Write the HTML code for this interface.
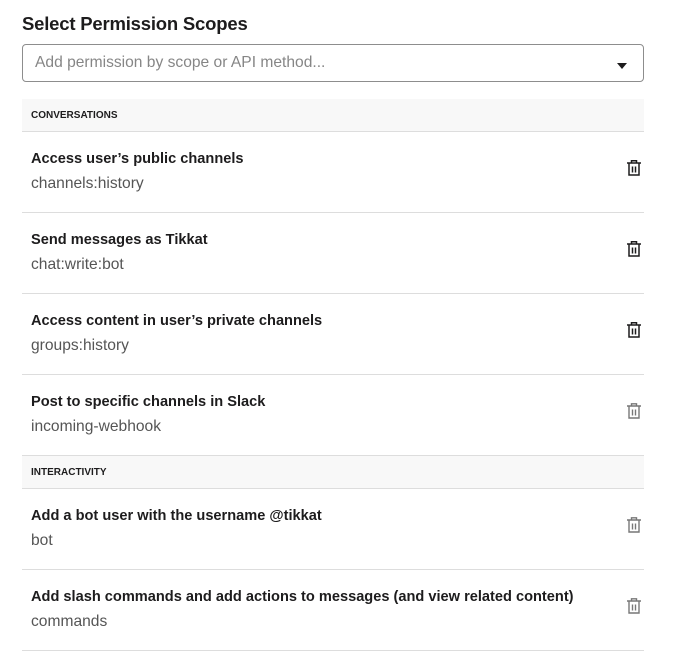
<!DOCTYPE html>
<html><head><style>
body{margin:0;background:#fff;font-family:"Liberation Sans",sans-serif;color:#1d1c1d;}
.w{position:absolute;left:22px;width:622px;}
h1{position:absolute;left:22px;top:13px;margin:0;font-size:18.5px;font-weight:bold;letter-spacing:-0.2px;}
.inp{border:1px solid #8d8d8d;border-radius:4px;box-sizing:border-box;height:38px;}
.inp span{position:absolute;left:12px;top:9px;font-size:15.6px;color:#868686;}
.inp i{position:absolute;right:16px;top:18px;width:0;height:0;border-left:5px solid transparent;border-right:5px solid transparent;border-top:6px solid #1d1c1d;}
.sec{background:#f8f8f8;border-bottom:1px solid #ddd;box-sizing:border-box;height:33px;}
.sec span{position:absolute;left:9px;top:11px;font-size:10px;font-weight:bold;}
.row{height:81px;border-bottom:1px solid #ddd;box-sizing:border-box;}
.row b{position:absolute;left:9px;top:19px;font-size:14.6px;}
.row span{position:absolute;left:9px;top:43px;font-size:15.6px;color:#555;}
.row svg{position:absolute;left:604px;top:27px;}
</style></head><body>
<h1>Select Permission Scopes</h1>
<div class="w inp" style="top:44px"><span>Add permission by scope or API method...</span><i></i></div>
<div class="w sec" style="top:99px"><span>CONVERSATIONS</span></div>
<div class="w row" style="top:132px"><b>Access user’s public channels</b><span>channels:history</span><svg width="16" height="18" viewBox="0 0 16 18" fill="none" stroke="#1d1c1d" stroke-width="1.5"><path d="M1 4h14M5.5 4V1.8h5V4M3 4.5v11.5h10V4.5M6.5 7.5v6M9.5 7.5v6"/></svg></div>
<div class="w row" style="top:213px"><b>Send messages as Tikkat</b><span>chat:write:bot</span><svg width="16" height="18" viewBox="0 0 16 18" fill="none" stroke="#1d1c1d" stroke-width="1.5"><path d="M1 4h14M5.5 4V1.8h5V4M3 4.5v11.5h10V4.5M6.5 7.5v6M9.5 7.5v6"/></svg></div>
<div class="w row" style="top:294px"><b>Access content in user’s private channels</b><span>groups:history</span><svg width="16" height="18" viewBox="0 0 16 18" fill="none" stroke="#1d1c1d" stroke-width="1.5"><path d="M1 4h14M5.5 4V1.8h5V4M3 4.5v11.5h10V4.5M6.5 7.5v6M9.5 7.5v6"/></svg></div>
<div class="w row" style="top:375px"><b>Post to specific channels in Slack</b><span>incoming-webhook</span><svg width="16" height="18" viewBox="0 0 16 18" fill="none" stroke="#777" stroke-width="1.4"><path d="M1 4h14M5.5 4V1.8h5V4M3 4.5v11.5h10V4.5M6.5 7.5v6M9.5 7.5v6"/></svg></div>
<div class="w sec" style="top:456px"><span>INTERACTIVITY</span></div>
<div class="w row" style="top:489px"><b>Add a bot user with the username @tikkat</b><span>bot</span><svg width="16" height="18" viewBox="0 0 16 18" fill="none" stroke="#777" stroke-width="1.4"><path d="M1 4h14M5.5 4V1.8h5V4M3 4.5v11.5h10V4.5M6.5 7.5v6M9.5 7.5v6"/></svg></div>
<div class="w row" style="top:570px"><b>Add slash commands and add actions to messages (and view related content)</b><span>commands</span><svg width="16" height="18" viewBox="0 0 16 18" fill="none" stroke="#777" stroke-width="1.4"><path d="M1 4h14M5.5 4V1.8h5V4M3 4.5v11.5h10V4.5M6.5 7.5v6M9.5 7.5v6"/></svg></div>
</body></html>
